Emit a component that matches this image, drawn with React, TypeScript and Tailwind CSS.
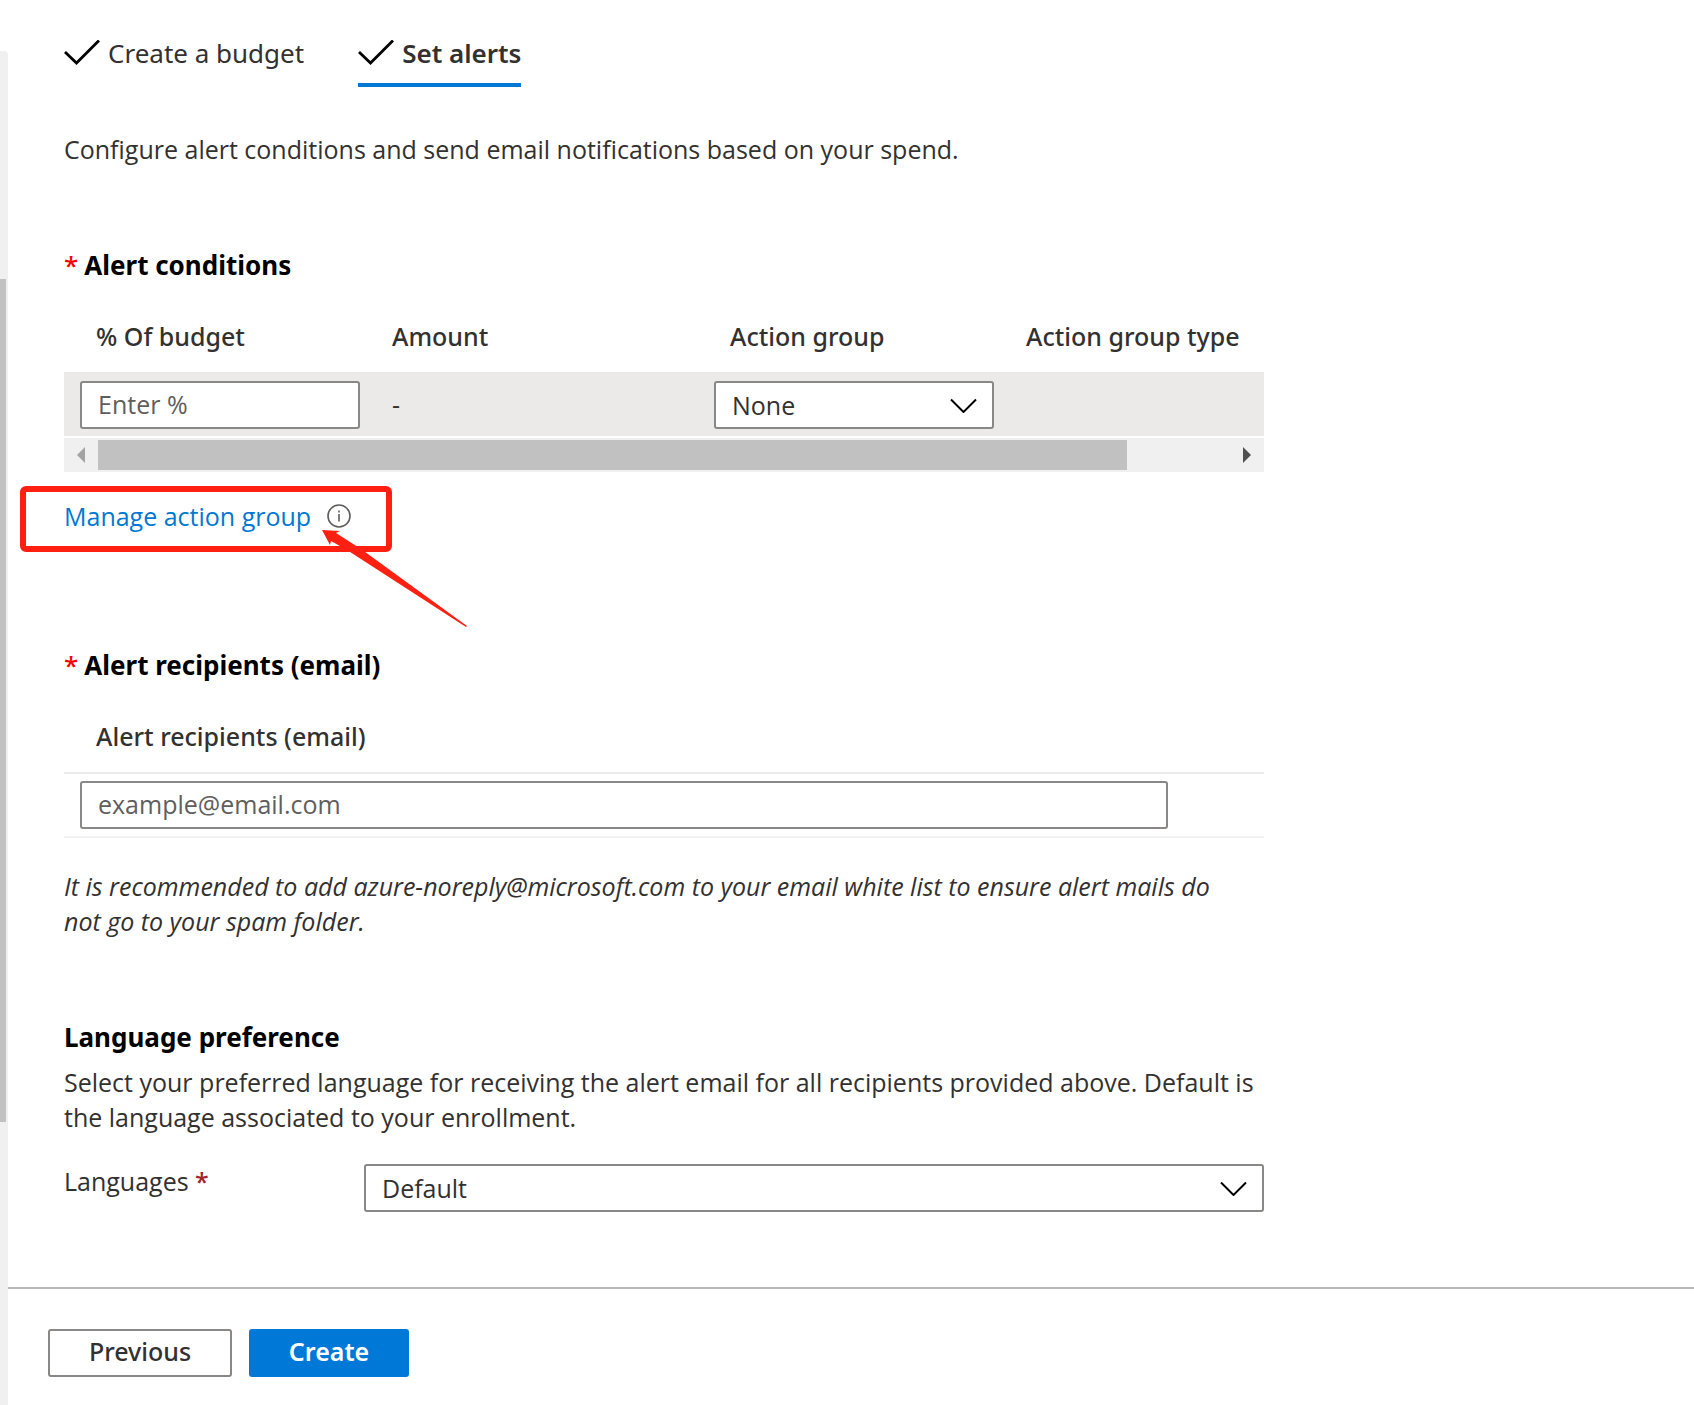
import type { ReactNode } from 'react';
import { clsx } from 'clsx';

const BORDER = 'border-2 border-[#8a8886] rounded-[3px]';
const NOTO = "font-['Noto_Sans','Open_Sans',sans-serif]";

function CheckMark() {
  return (
    <svg width="36" height="28" viewBox="0 0 36 28" fill="none" aria-hidden="true">
      <path d="M1 12 L12.5 23 L35 0.5" stroke="#000" strokeWidth="2.8" />
    </svg>
  );
}

function Chevron() {
  return (
    <svg
      className="absolute right-4 top-1/2 -translate-y-1/2 pointer-events-none"
      width="28"
      height="16"
      viewBox="0 0 28 16"
      fill="none"
      aria-hidden="true"
    >
      <path d="M1 2.5 L13.5 15 L26 2.5" stroke="#000" strokeWidth="2" />
    </svg>
  );
}

interface TabProps {
  label: string;
  active?: boolean;
}

function Tab({ label, active = false }: TabProps) {
  return (
    <button
      type="button"
      role="tab"
      aria-selected={active}
      className={clsx(
        NOTO,
        'flex items-center gap-2 pb-3 border-b-4 text-[26px] leading-[35px]',
        active ? 'border-[#0078d4] font-semibold' : 'border-transparent'
      )}
    >
      <CheckMark />
      {label}
    </button>
  );
}

function Heading({ children, required = false }: { children: ReactNode; required?: boolean }) {
  return (
    <h2 className={clsx(NOTO, 'text-[26px] leading-[35px] font-bold text-black')}>
      {required && <span className="mr-1.5 font-medium text-[#ff0000]">*</span>}
      {children}
    </h2>
  );
}

function HeaderCell({ children, className }: { children: ReactNode; className?: string }) {
  return (
    <th
      scope="col"
      className={clsx(NOTO, 'pl-8 pt-9 pb-[18px] text-left font-medium whitespace-nowrap', className)}
    >
      {children}
    </th>
  );
}

interface SelectProps {
  id?: string;
  label?: string;
  options: string[];
}

function Select({ id, label, options }: SelectProps) {
  return (
    <div className="relative">
      <select
        id={id}
        aria-label={label}
        className={clsx(BORDER, 'block w-full h-12 pl-4 pr-12 appearance-none bg-white')}
      >
        {options.map((option) => (
          <option key={option}>{option}</option>
        ))}
      </select>
      <Chevron />
    </div>
  );
}

function HorizontalScrollbar() {
  return (
    <div className="flex h-[34px] py-0.5 bg-[#f0f0f0]">
      <button type="button" aria-label="Scroll left" className="w-[34px] flex items-center justify-center">
        <svg width="8" height="16" viewBox="0 0 8 16" aria-hidden="true">
          <path d="M8 0 L0 8 L8 16 Z" fill="#a3a3a3" />
        </svg>
      </button>
      <div className="flex-1">
        <div className="w-10/11 h-full bg-[#c1c1c1]" />
      </div>
      <button type="button" aria-label="Scroll right" className="w-[34px] flex items-center justify-center">
        <svg width="8" height="16" viewBox="0 0 8 16" aria-hidden="true">
          <path d="M0 0 L8 8 L0 16 Z" fill="#505050" />
        </svg>
      </button>
    </div>
  );
}

function PageScrollbar() {
  return (
    <div className="w-2 shrink-0 flex flex-col pt-[51px]">
      <div className="flex-1 flex flex-col bg-[#f0f0f0] rounded-tr-sm">
        <div className="grow-[228]" />
        <div className="grow-[843] w-1.5 bg-[#c1c1c1]" />
        <div className="grow-[283]" />
      </div>
    </div>
  );
}

function ManageActionGroup() {
  return (
    <div className="relative mt-[27px] flex items-center gap-4">
      <a href="#action-groups" className="text-[#0078d4]">
        Manage action group
      </a>
      <svg width="24" height="26" viewBox="0 0 24 26" fill="none" stroke="#605e5c" aria-hidden="true">
        <circle cx="12" cy="12" r="11" strokeWidth="1.6" />
        <path d="M12 10 V17.5 M12 6.5 V8.5" strokeWidth="1.6" />
      </svg>
      <div className="absolute -left-11 -top-[13px] w-[372px] h-[66px] border-[6px] border-[#ff2012] rounded-md pointer-events-none" />
      <svg
        className="absolute left-[258px] top-[31px] pointer-events-none"
        width="146"
        height="98"
        viewBox="0 0 146 98"
        aria-hidden="true"
      >
        <path d="M0 0 L18 1 L14 3 L39 19 L145 96 L144 97 L25 20 L9 11 L8 15 Z" fill="#ff2012" />
      </svg>
    </div>
  );
}

export default function App() {
  return (
    <div className="flex min-h-screen bg-white text-[#323130] text-[25px] leading-[35px] font-['Open_Sans','Noto_Sans',sans-serif]">
      <PageScrollbar />
      <div className="flex-1 min-w-0 flex flex-col">
        <main className="flex-1 max-w-[1256px] pl-14 pt-9 pb-[75px]">
          <div role="tablist" className="flex gap-[54px]">
            <Tab label="Create a budget" />
            <Tab label="Set alerts" active />
          </div>

          <p className="mt-[45px]">
            Configure alert conditions and send email notifications based on your spend.
          </p>

          <section className="mt-[81px]">
            <Heading required>Alert conditions</Heading>
            <table className="w-full table-fixed border-collapse">
              <thead>
                <tr>
                  <HeaderCell className="w-[296px]">% Of budget</HeaderCell>
                  <HeaderCell className="w-[338px]">Amount</HeaderCell>
                  <HeaderCell className="w-[296px]">Action group</HeaderCell>
                  <HeaderCell>Action group type</HeaderCell>
                </tr>
              </thead>
              <tbody>
                <tr className="bg-[#ebeae9]">
                  <td className="pl-4 pt-[9px] pb-[7px]">
                    <input
                      type="text"
                      aria-label="% Of budget"
                      placeholder="Enter %"
                      className={clsx(BORDER, 'block w-full h-12 px-4 pb-0.5 bg-white placeholder:text-[#605e5c]')}
                    />
                  </td>
                  <td className="pl-8">-</td>
                  <td className="pl-4 pt-[9px] pb-[7px]">
                    <Select label="Action group" options={['None']} />
                  </td>
                  <td />
                </tr>
              </tbody>
            </table>
            <div className="mt-0.5">
              <HorizontalScrollbar />
            </div>
            <ManageActionGroup />
          </section>

          <section className="mt-[114px]">
            <Heading required>Alert recipients (email)</Heading>
            <label htmlFor="recipients" className={clsx(NOTO, 'block pl-8 pt-9 pb-[18px] font-medium')}>
              Alert recipients (email)
            </label>
            <div className="border-t-2 border-t-[#ebebeb] border-b-2 border-b-[#f2f2f2] pl-4 pr-24 py-[7px]">
              <input
                id="recipients"
                type="email"
                placeholder="example@email.com"
                className={clsx(BORDER, 'block w-full h-12 px-4 pb-0.5 bg-white placeholder:text-[#605e5c]')}
              />
            </div>
            <p className="mt-[31px] pr-6 italic">
              It is recommended to add azure-noreply@microsoft.com to your email white list to ensure alert
              mails do not go to your spam folder.
            </p>
          </section>

          <section className="mt-[81px]">
            <Heading>Language preference</Heading>
            <p className="mt-2.5">
              Select your preferred language for receiving the alert email for all recipients provided
              above. Default is the language associated to your enrollment.
            </p>
            <div className="mt-[29px] flex">
              <label htmlFor="languages" className="w-[300px]">
                Languages <span className="font-semibold text-[#a4262c]">*</span>
              </label>
              <div className="flex-1">
                <Select id="languages" options={['Default']} />
              </div>
            </div>
          </section>
        </main>

        <footer className="flex gap-[17px] border-t-2 border-[#b9b9b9] pl-10 pt-10 pb-7">
          <button type="button" className={clsx(BORDER, NOTO, 'w-[184px] h-12 pb-1 font-medium')}>
            Previous
          </button>
          <button
            type="button"
            className={clsx(NOTO, 'w-40 h-12 pb-1 rounded-[3px] bg-[#0078d7] font-semibold text-white')}
          >
            Create
          </button>
        </footer>
      </div>
    </div>
  );
}
